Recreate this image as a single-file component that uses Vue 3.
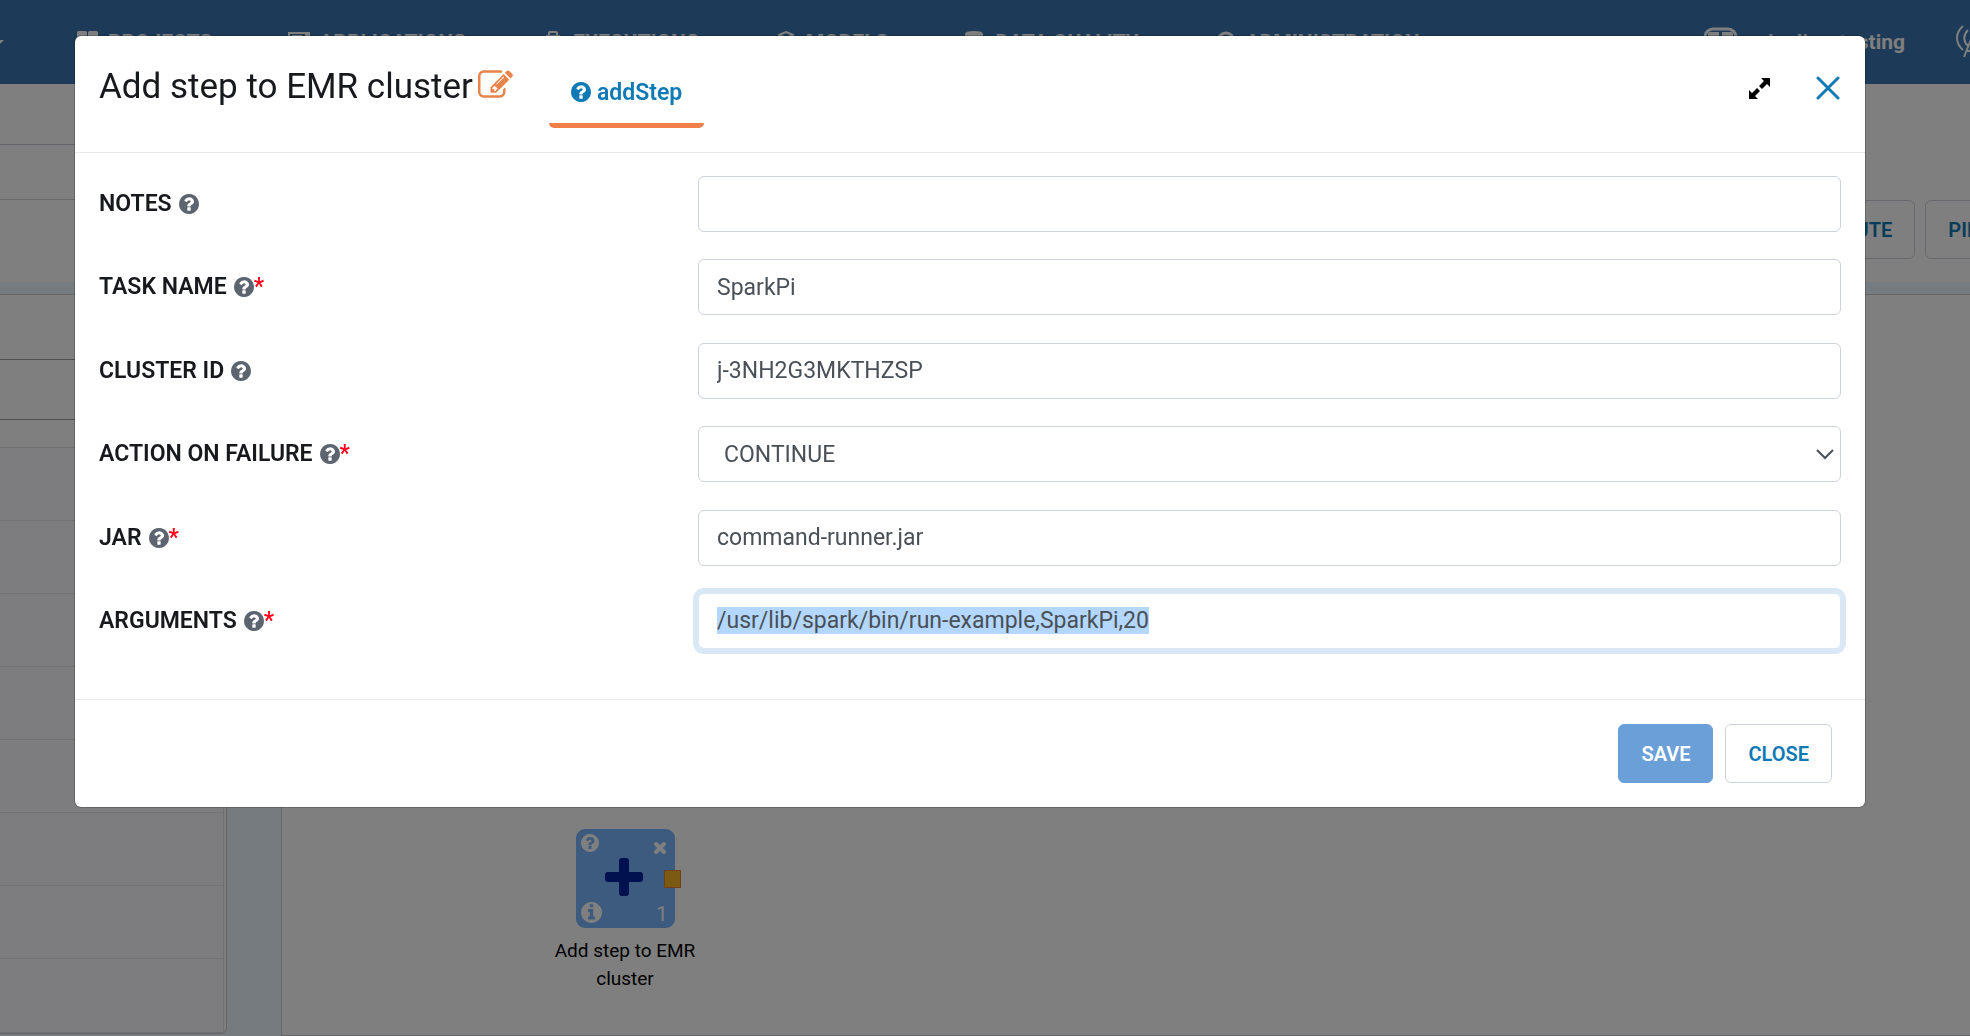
<script setup>
import { onMounted, ref } from 'vue'

const QUESTION =
  'M1024 1376v-192q0-14-9-23t-23-9h-192q-14 0-23 9t-9 23v192q0 14 9 23t23 9h192q14 0 23-9t9-23zm256-672q0-88-55.5-163t-138.5-116-170-41q-243 0-371 213-15 24 8 42l132 100q7 6 19 6 16 0 25-12 53-68 86-92 34-24 86-24 48 0 85.5 26t37.5 59q0 38-20 61t-68 45q-63 28-115.5 86.5t-52.5 125.5v36q0 14 9 23t23 9h192q14 0 23-9t9-23q0-19 21.5-49.5t54.5-49.5q32-18 49-28.5t46-35 44.5-48 28-60.5 12.5-81zm384 192q0 209-103 385.5t-279.5 279.5-385.5 103-385.5-103-279.5-279.5-103-385.5 103-385.5 279.5-279.5 385.5-103 385.5 103 279.5 279.5 103 385.5z'
const INFO =
  'M1152 1376v-160q0-14-9-23t-23-9h-96v-512q0-14-9-23t-23-9h-320q-14 0-23 9t-9 23v160q0 14 9 23t23 9h96v320h-96q-14 0-23 9t-9 23v160q0 14 9 23t23 9h448q14 0 23-9t9-23zm-128-896v-160q0-14-9-23t-23-9h-192q-14 0-23 9t-9 23v160q0 14 9 23t23 9h192q14 0 23-9t9-23zm640 416q0 209-103 385.5t-279.5 279.5-385.5 103-385.5-103-279.5-279.5-103-385.5 103-385.5 279.5-279.5 385.5-103 385.5 103 279.5 279.5 103 385.5z'
const EDIT =
  'M888 1184l116-116-152-152-116 116v56h96v96h56zm440-720q-16-16-33 1l-350 350q-17 17-1 33t33-1l350-350q17-17 1-33zm80 594v190q0 119-84.5 203.5t-203.5 84.5h-832q-119 0-203.5-84.5t-84.5-203.5v-832q0-119 84.5-203.5t203.5-84.5h832q63 0 117 25 15 7 18 23 3 17-9 29l-49 49q-14 14-32 8-23-6-45-6h-832q-66 0-113 47t-47 113v832q0 66 47 113t113 47h832q66 0 113-47t47-113v-126q0-13 9-22l64-64q15-15 35-7t20 29zm-96-738l288 288-672 672h-288v-288zm444 132l-92 92-288-288 92-92q28-28 68-28t68 28l152 152q28 28 28 68t-28 68z'

const fields = ref([
  { id: 'notes', label: 'NOTES', value: '' },
  { id: 'task-name', label: 'TASK NAME', value: 'SparkPi', required: true },
  { id: 'cluster-id', label: 'CLUSTER ID', value: 'j-3NH2G3MKTHZSP' },
  { id: 'action', label: 'ACTION ON FAILURE', value: 'CONTINUE', required: true, options: ['CONTINUE'] },
  { id: 'jar', label: 'JAR', value: 'command-runner.jar', required: true },
  { id: 'arguments', label: 'ARGUMENTS', value: '/usr/lib/spark/bin/run-example,SparkPi,20', required: true },
])

onMounted(() => {
  const el = document.getElementById('arguments')
  el.focus()
  el.select()
})
</script>

<template>
  <div class="app">
    <header class="nav">
      <svg class="caret" viewBox="0 0 10 5"><path d="M0 0h10L5 5z" /></svg>
      <nav class="links">
        <a href="#">
          <svg viewBox="0 0 22 22"><path d="M0 1.500q0-1.500 1.500-1.500h7q1.500 0 1.500 1.500V10H0zM11 1.500q0-1.500 1.500-1.500h7q1.500 0 1.500 1.500V10H11zM0 11h10v10H0zM11 11h10v10H11z" /></svg>PROJECTS</a>
        <a href="#">
          <svg viewBox="0 0 22 22"><path d="M0 1h22v20H0zM2 3v16h18V3zM4 4h10v1H4zM17 3h3v2h-3z" fill-rule="evenodd" /></svg>APPLICATIONS</a>
        <a href="#">
          <svg viewBox="0 0 22 22"><path d="M7 4V2q0-1 1-1h6q1 0 1 1v2M5 5h12v15H5z" class="line" /></svg>EXECUTIONS</a>
        <a href="#">
          <svg viewBox="0 0 22 22"><path d="M11 1l7 3v11l-7 5-7-5V4zM4 4l7 3 7-3" class="line" /></svg>MODELS</a>
        <a href="#">
          <svg viewBox="0 0 22 22"><path d="M1 3q0-3 9-3t9 3v15q0 3-9 3t-9-3z" /></svg>DATA QUALITY</a>
        <a href="#">
          <svg viewBox="0 0 22 22"><circle cx="11" cy="10" r="8" class="line thick" /></svg>ADMINISTRATION</a>
      </nav>
      <a href="#" class="workspace">
        <svg viewBox="0 0 36 30"><rect x="2" y="2" width="31" height="26" rx="8" class="line thick" /><path d="M5 7q0-2 2-2h9v10H5zM19 5h9q2 0 2 2v8H19z" /></svg>pipeline-testing</a>
      <svg class="antenna" viewBox="0 0 40 34"><path d="M8 1C0 8 0 18 8 25M13 5C8 10 8 16 13 21M17 12L9 32M17 12l8 20M11 26h12M21 5c5 5 5 11 0 16M26 1c8 7 8 17 0 24" class="line" /></svg>
    </header>

    <section class="top">
      <div class="crumbs"><div></div><div></div></div>
      <div class="actions">
        <button type="button" class="btn">EXECUTE</button>
        <button type="button" class="btn">PIPELINE</button>
      </div>
    </section>

    <main class="work">
      <aside class="side">
        <div class="search"></div>
        <div class="filter"></div>
        <ul class="list"><li v-for="n in 8" :key="n"></li></ul>
      </aside>
      <section class="canvas">
        <div class="node">
          <div class="tile">
            <svg class="n-help" viewBox="128 128 1536 1536"><path :d="QUESTION" /></svg>
            <svg class="n-close" viewBox="0 0 14 14"><path d="M3 3l8 8M11 3l-8 8" /></svg>
            <svg class="n-plus" viewBox="0 0 38 38"><rect x="14" width="10" height="38" rx="3" /><rect y="14" width="38" height="10" rx="3" /></svg>
            <svg class="n-info" viewBox="128 128 1536 1536"><path :d="INFO" /></svg>
            <span class="n-count">1</span>
            <i class="port"></i>
          </div>
          <div class="n-label">Add step to EMR cluster</div>
        </div>
      </section>
    </main>

    <div class="backdrop">
      <form class="modal" role="dialog" aria-labelledby="dialog-title" @submit.prevent>
        <header class="head">
          <h1 id="dialog-title">Add step to EMR cluster</h1>
          <button type="button" class="icon-btn edit" aria-label="Edit name"><svg viewBox="0 128 1792 1408"><path :d="EDIT" /></svg></button>
          <a href="#" class="tab"><svg viewBox="128 128 1536 1536"><path :d="QUESTION" /></svg>addStep</a>
          <button type="button" class="icon-btn expand" aria-label="Expand">
            <svg viewBox="0 0 21 21"><path d="M12 0h9v9l-3-3-5 5-3-3 5-5zM9 21H0v-9l3 3 5-5 3 3-5 5z" /></svg>
          </button>
          <button type="button" class="icon-btn dismiss" aria-label="Close dialog">
            <svg viewBox="0 0 24 24"><path d="M2 2l20 20M22 2L2 22" /></svg>
          </button>
        </header>

        <div class="body">
          <div v-for="f in fields" :key="f.id" class="row">
            <label :for="f.id">{{ f.label }}<svg viewBox="128 128 1536 1536"><path :d="QUESTION" /></svg><span v-if="f.required">*</span></label>
            <div v-if="f.options" class="select">
              <select :id="f.id" v-model="f.value" class="field">
                <option v-for="o in f.options" :key="o">{{ o }}</option>
              </select>
              <svg viewBox="0 0 18 11"><path d="M1 1l8 8 8-8" /></svg>
            </div>
            <input v-else :id="f.id" v-model="f.value" type="text" class="field" autocomplete="off" spellcheck="false" />
          </div>
        </div>

        <footer class="foot">
          <button type="submit" class="btn save">SAVE</button>
          <button type="button" class="btn">CLOSE</button>
        </footer>
      </form>
    </div>
  </div>
</template>

<style>
body {
  margin: 0;
  background: #fff;
}
</style>

<style scoped>
* {
  box-sizing: border-box;
}
.app {
  display: flex;
  flex-direction: column;
  height: 100vh;
  overflow: hidden;
  font-family: Roboto, "Liberation Sans", sans-serif;
  color: #000;
}
svg {
  display: block;
  flex: none;
  fill: currentColor;
}
a {
  text-decoration: none;
}
.line {
  fill: none;
  stroke: currentColor;
  stroke-width: 2;
}
.thick {
  stroke-width: 3;
}

/* top navigation */
.nav {
  display: flex;
  align-items: center;
  flex: none;
  height: 84px;
  background: #3a76b0;
  color: #fff;
  white-space: nowrap;
}
.nav a {
  display: flex;
  align-items: center;
  gap: 9px;
  color: #fff;
  font-size: 21px;
  font-weight: 700;
}
.caret {
  width: 10px;
  height: 5px;
  margin: 0 73px 0 -6px;
}
.links {
  display: flex;
  flex: 1;
}
.links a {
  margin-right: 76px;
}
.links svg {
  width: 22px;
  height: 22px;
}
.nav .workspace {
  gap: 17px;
}
.workspace svg {
  width: 36px;
  height: 30px;
}
.antenna {
  width: 40px;
  height: 34px;
  margin: 0 -25px 0 50px;
}

/* page heading */
.top {
  display: flex;
  justify-content: space-between;
  flex: none;
  height: 198px;
}
.crumbs {
  width: 50%;
}
.crumbs div {
  height: 55px;
  border-bottom: 1px solid #d0d0d0;
}
.crumbs div:first-child {
  height: 61px;
  border-color: #c4ccd6;
}
.actions {
  display: flex;
  align-items: flex-end;
  gap: 10px;
  margin: 0 -86px 23px 0;
}
.btn {
  height: 59px;
  padding: 0 22px;
  border: 1px solid #cdd2da;
  border-radius: 6px;
  background: #fff;
  color: #0f7ab5;
  font: 600 20px Roboto, "Liberation Sans", sans-serif;
}

/* workspace */
.work {
  display: flex;
  flex: 1;
  gap: 54px;
  min-height: 0;
  padding-top: 12px;
  background: #ecf6fe;
}
.side {
  width: 227px;
  height: 740px;
  padding-right: 2px;
  border: 1px solid #c8ccd2;
  border-left: 0;
  border-radius: 0 0 6px 0;
  background: #fff;
}
.search {
  height: 65px;
  border-bottom: 1px solid #a0a0a0;
}
.filter {
  height: 60px;
  border-bottom: 1px solid #a0a0a0;
}
.list {
  margin: 27px 0 0;
  padding: 0;
  border: 1px solid #e0e0e2;
  border-left: 0;
  list-style: none;
  background: #fafbff;
}
.list li {
  height: 73px;
  border-bottom: 1px solid #e6e6e8;
}
.list li:last-child {
  border: 0;
}
.canvas {
  position: relative;
  flex: 1;
  border: 1px solid #c8ccd2;
  border-right: 0;
  background: #fff;
}
.node {
  position: absolute;
  top: 534px;
  left: 263px;
  display: flex;
  flex-direction: column;
  align-items: center;
  gap: 9px;
  width: 160px;
}
.tile {
  position: relative;
  width: 99px;
  height: 99px;
  border-radius: 9px;
  background: #7bb6fc;
  color: #fff;
}
.tile > * {
  position: absolute;
}
.n-help {
  top: 5px;
  left: 5px;
  width: 18px;
  height: 18px;
}
.n-close {
  top: 12px;
  right: 8px;
  width: 14px;
  height: 14px;
  stroke: #fff;
  stroke-width: 4;
  stroke-linecap: round;
}
.n-plus {
  top: 29px;
  left: 29px;
  width: 38px;
  height: 38px;
  color: #00229e;
}
.n-info {
  bottom: 5px;
  left: 5px;
  width: 21px;
  height: 21px;
}
.n-count {
  right: 7px;
  bottom: 2px;
  font-size: 20px;
}
.port {
  top: 41px;
  right: -6px;
  width: 17px;
  height: 18px;
  border: 1px solid #e0803c;
  background: #f8b424;
}
.n-label {
  font-size: 19px;
  line-height: 28px;
  text-align: center;
}

/* dialog */
.backdrop {
  position: fixed;
  inset: 0;
  padding: 35px 104px 0 74px;
  background: rgba(0, 0, 0, 0.5);
}
.modal {
  border: 1px solid rgba(0, 0, 0, 0.2);
  border-radius: 7px;
  background: #fff;
  background-clip: padding-box;
  color: #17191c;
}
.head {
  display: flex;
  align-items: flex-start;
  height: 117px;
  padding: 27px 25px 0 24px;
  border-bottom: 1px solid #e6e9ec;
}
h1 {
  margin: 0;
  font-size: 35px;
  font-weight: 400;
  line-height: 48px;
}
.icon-btn {
  padding: 0;
  border: 0;
  background: none;
}
.edit {
  margin: 7px 0 0 5px;
  color: #e8834a;
}
.edit svg {
  width: 35px;
  height: 28px;
}
.tab {
  display: flex;
  gap: 6px;
  height: 65px;
  margin-left: 36px;
  padding: 18px 22px 0;
  border-bottom: 5px solid #f08048;
  border-radius: 0 0 5px 5px;
  color: #0f7ab5;
  font-size: 23px;
  font-weight: 600;
  line-height: 24px;
}
.tab svg {
  width: 20px;
  height: 20px;
  margin-top: 1px;
}
.expand {
  margin: 15px 46px 0 auto;
  color: #000;
}
.expand svg {
  width: 21px;
  height: 21px;
}
.dismiss {
  margin-top: 13px;
}
.dismiss svg {
  width: 24px;
  height: 24px;
  stroke: #0f7ab5;
  stroke-width: 3;
  stroke-linecap: round;
}
.body {
  display: flex;
  flex-direction: column;
  justify-content: space-between;
  min-height: 546px;
  padding: 23px 24px 50px;
}
.row {
  display: flex;
  align-items: center;
}
.row label {
  display: flex;
  align-items: center;
  flex: 0 0 599px;
  font-size: 23px;
  font-weight: 600;
  line-height: 28px;
}
.row label svg {
  width: 20px;
  height: 20px;
  margin-left: 7px;
  color: #5c656f;
}
.row label span {
  color: #ff0018;
}
.field {
  display: block;
  flex: 1;
  width: 100%;
  min-width: 0;
  height: 56px;
  padding: 0 18px;
  border: 1px solid #cdd2da;
  border-radius: 6px;
  outline: 0;
  background: #fff;
  color: #495057;
  font: 23px/35px Roboto, "Liberation Sans", sans-serif;
}
.field:focus {
  border-color: #dae8f6;
  box-shadow: 0 0 0 5px #dae8f6;
}
.field::selection {
  background: #b3d7ff;
  color: #495057;
}
.select {
  position: relative;
  flex: 1;
}
.select select {
  padding: 0 25px;
  appearance: none;
}
.select svg {
  position: absolute;
  top: 23px;
  right: 7px;
  width: 18px;
  height: 11px;
  fill: none;
  stroke: #495057;
  stroke-width: 2;
  pointer-events: none;
}
.foot {
  display: flex;
  justify-content: flex-end;
  gap: 12px;
  padding: 24px 33px;
  border-top: 1px solid #e6e9ec;
}
.save {
  border-color: #6b9fd8;
  background: #6b9fd8;
  color: #fff;
}
</style>
